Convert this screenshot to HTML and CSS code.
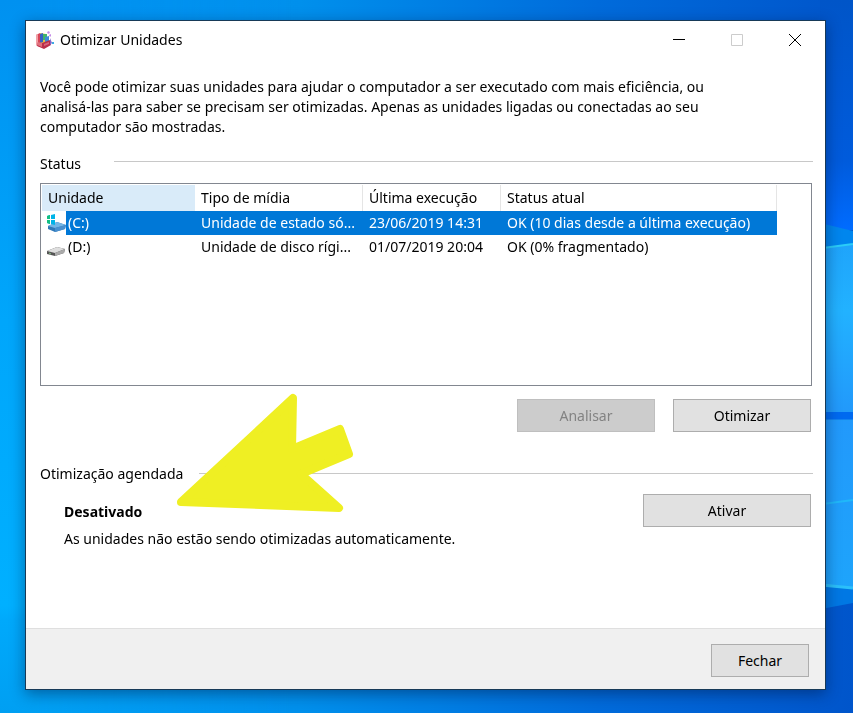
FILE: index.html
```html
<!DOCTYPE html>
<html lang="pt-BR">
<head>
<meta charset="utf-8">
<meta name="viewport" content="width=device-width, initial-scale=1">
<title>Otimizar Unidades</title>
<link rel="stylesheet" href="styles.css">
</head>
<body>
<svg class="wallpaper" viewBox="0 0 853 713" preserveAspectRatio="none" aria-hidden="true">
  <defs>
    <linearGradient id="sky" x1="0" x2="1" y1="0" y2="0">
      <stop offset="0" stop-color="#0095f3"/><stop offset=".35" stop-color="#0090ec"/><stop offset=".7" stop-color="#006bdb"/><stop offset="1" stop-color="#0055cb"/>
    </linearGradient>
    <linearGradient id="left" x1="0" x2="0" y1="0" y2="1">
      <stop offset="0" stop-color="#0091f0"/><stop offset=".45" stop-color="#00a6fb"/><stop offset=".85" stop-color="#00b0ff"/><stop offset=".87" stop-color="#00a9fb"/><stop offset="1" stop-color="#009ff2"/>
    </linearGradient>
    <linearGradient id="fade" x1="0" x2="1" y1="0" y2="0">
      <stop offset="0" stop-color="#fff"/><stop offset=".1" stop-color="#fff"/><stop offset="1" stop-color="#000"/>
    </linearGradient>
    <mask id="fade-right"><rect width="300" height="713" fill="url(#fade)"/></mask>
    <linearGradient id="right" x1="0" x2="0" y1="0" y2="1">
      <stop offset="0" stop-color="#0055c8"/><stop offset=".7" stop-color="#005bdc"/><stop offset="1" stop-color="#006cff"/>
    </linearGradient>
    <linearGradient id="pane" x1="0" x2="0" y1="0" y2="1">
      <stop offset="0" stop-color="#1fa4fb"/><stop offset=".4" stop-color="#22b2ff"/><stop offset="1" stop-color="#2299fb"/>
    </linearGradient>
    <linearGradient id="pane2" x1="0" x2="0" y1="0" y2="1">
      <stop offset="0" stop-color="#2299fb"/><stop offset="1" stop-color="#1ea4fb"/>
    </linearGradient>
  </defs>
  <rect width="853" height="713" fill="url(#sky)"/>
  <rect width="300" height="713" fill="url(#left)" mask="url(#fade-right)"/>
  <rect x="820" width="33" height="230" fill="url(#right)"/>
  <path d="M800 218L853 231V246L800 251Z" fill="#0086ee"/>
  <path d="M800 251L853 244V412H800Z" fill="url(#pane)"/>
  <path d="M800 251L853 244" stroke="#2bcdf8" stroke-width="2"/>
  <path d="M800 412H853V420H800Z" fill="#006af0"/>
  <path d="M800 420H853V588L800 583Z" fill="url(#pane2)"/>
  <path d="M800 411H853M800 420H853" stroke="#209bf5"/>
  <path d="M800 507L853 500" stroke="#20b8fa" stroke-width="2"/>
  <path d="M800 583L853 588V603L800 613Z" fill="#0078e4"/>
  <path d="M800 583L853 588" stroke="#2bc0fa" stroke-width="3"/>
</svg>

<section class="window" aria-labelledby="window-title">
  <header class="titlebar">
    <svg class="app-icon" viewBox="0 0 20 20" aria-hidden="true">
      <path d="M1 5L5 3V17L1 15Z" fill="#d84557"/>
      <path d="M1 5L3 4V16L1 15Z" fill="#f0a0a6"/>
      <path d="M5 3L11 4V17L5 17Z" fill="#e9bd42"/>
      <path d="M5 4L8 3V12L5 13Z" fill="#3563c3"/>
      <path d="M8 4H12V10H8Z" fill="#42b669"/>
      <path d="M10 7L14 6V14L10 15Z" fill="#3b8ed8"/>
      <path d="M3 12L7 13L15 10L16 15L9 19L2 16Z" fill="#b92f4b"/>
      <path d="M3 12L7 13V17L2 15Z" fill="#e0707c"/>
      <path d="M9 14L14 12V14L9 16Z" fill="#d9677c"/>
      <path d="M12 2L14 1L15 3L13 4ZM14 5L16 4L16 6L15 7Z" fill="#c58be8"/>
      <path d="M15 8L17 13L15 15Z" fill="#8268ca"/>
      <path d="M17 12H19V14H17Z" fill="#3cabe4"/>
    </svg>
    <h1 id="window-title">Otimizar Unidades</h1>
    <div class="controls">
      <button type="button" aria-label="Minimizar"><svg viewBox="0 0 12 12"><path d="M0 5.500H12"/></svg></button>
      <button type="button" aria-label="Maximizar" disabled><svg viewBox="0 0 12 12"><path d="M.5 .5H11.500V11.500H.5Z"/></svg></button>
      <button type="button" aria-label="Fechar janela"><svg viewBox="0 0 12 12"><path d="M0 0L12 12M12 0L0 12"/></svg></button>
    </div>
  </header>

  <main class="content">
    <p class="intro">Você pode otimizar suas unidades para ajudar o computador a ser executado com mais eficiência, ou analisá-las para saber se precisam ser otimizadas. Apenas as unidades ligadas ou conectadas ao seu computador são mostradas.</p>

    <h2 class="group status-group"><span>Status</span></h2>
    <div class="list">
      <table>
        <colgroup><col class="c-drive"><col class="c-type"><col class="c-date"><col class="c-status"><col></colgroup>
        <thead>
          <tr><th class="sorted" scope="col">Unidade</th><th scope="col">Tipo de mídia</th><th scope="col">Última execução</th><th scope="col">Status atual</th><td></td></tr>
        </thead>
        <tbody>
          <tr class="selected">
            <td class="drive"><div><svg viewBox="0 0 20 18" aria-hidden="true">
              <path d="M2 12L11 8L20 11L19 15L9 18L2 15Z" fill="#2f78b7"/><path d="M2 12L11 8L20 11L9 14Z" fill="#75b6e5"/><path d="M9 14L20 11L19 15L9 18Z" fill="#4990cf"/>
              <path d="M1 2L4 1V5H1ZM5 1L9 0V5H5ZM1 6H4V10L1 9ZM5 6H9V11L5 10Z" fill="#00b4e8"/><path d="M1 2L4 1V5H1ZM1 6H4V10L1 9Z" fill="#13bf83"/>
            </svg><span>(C:)</span></div></td>
            <td>Unidade de estado só...</td><td>23/06/2019 14:31</td><td>OK (10 dias desde a última execução)</td><td class="rest"></td>
          </tr>
          <tr>
            <td class="drive"><div><svg viewBox="0 0 20 18" aria-hidden="true">
              <path d="M1 13L11 9L19 11L18 15L9 18L1 16Z" fill="#555"/><path d="M1 13L11 9L19 11L9 15Z" fill="#dedede"/><path d="M9 15L19 11L18 15L9 18Z" fill="#aaa"/><path d="M3 15L5 16" stroke="#8bc48b"/>
            </svg><span>(D:)</span></div></td>
            <td>Unidade de disco rígi...</td><td>01/07/2019 20:04</td><td>OK (0% fragmentado)</td><td class="rest"></td>
          </tr>
        </tbody>
      </table>
    </div>
    <div class="actions">
      <button class="btn" type="button" disabled>Analisar</button>
      <button class="btn" type="button">Otimizar</button>
    </div>

    <h2 class="group schedule-group"><span>Otimização agendada</span></h2>
    <div class="schedule">
      <div class="schedule-text">
        <strong>Desativado</strong>
        <p>As unidades não estão sendo otimizadas automaticamente.</p>
      </div>
      <button class="btn wide" type="button">Ativar</button>
    </div>
    <svg class="arrow" viewBox="0 0 180 122" aria-hidden="true">
      <path d="M118 8L117 59L165 39L174 64L126 84L164 118L6 112Z"/>
    </svg>
  </main>

  <footer class="footer"><button class="btn close" type="button">Fechar</button></footer>
</section>
</body>
</html>
```
FILE: styles.css
```css
* { box-sizing: border-box; }

body {
  margin: 0;
  min-height: 100vh;
  padding: 20px 27px 23px 25px;
  display: flex;
  background: #0078d7;
  color: #000;
  font: 14px/20px "Noto Sans", "Open Sans", sans-serif;
}

h1, h2, p { margin: 0; font-size: inherit; font-weight: 400; }
button { font: inherit; color: inherit; }

.wallpaper {
  position: fixed;
  inset: 0;
  z-index: -1;
  width: 100%;
  height: 100%;
}

.window {
  flex: 1;
  min-width: 0;
  display: flex;
  flex-direction: column;
  background: #fff;
  border: 1px solid #173a58;
  box-shadow: 0 4px 14px rgba(0, 20, 60, .45);
}

.titlebar {
  display: flex;
  align-items: center;
  height: 37px;
  padding: 0 1px 0 9px;
}
.app-icon { width: 20px; height: 20px; margin-right: 5px; }
.controls { display: flex; margin-left: auto; }
.controls button {
  width: 58px;
  height: 36px;
  padding: 0;
  border: 0;
  background: none;
  display: flex;
  align-items: center;
  justify-content: center;
}
.controls svg { width: 12px; height: 12px; fill: none; stroke: #000; }
.controls button:disabled svg { stroke: #ccc; }

.content { position: relative; flex: 1; padding: 19px 12px 0 14px; }
.intro { max-width: 690px; }

.group { display: flex; align-items: center; }
.group::after { content: ""; flex: 1; height: 1px; background: #c8c8c8; }
.status-group { margin-top: 17px; }
.status-group::after { margin-bottom: 5px; }
.status-group span { width: 74px; }
.schedule-group { margin-top: 32px; }
.schedule-group::after { margin-bottom: 1px; }
.schedule-group span { margin-right: 16px; }

.list {
  height: 203px;
  margin: 9px 1px 0 0;
  padding: 1px;
  border: 1px solid #828790;
}
table { width: 100%; table-layout: fixed; border-collapse: separate; border-spacing: 0; }
.c-drive { width: 153px; }
.c-type { width: 168px; }
.c-date { width: 138px; }
.c-status { width: 276px; }
th, td {
  padding: 0 6px;
  height: 24px;
  line-height: 24px;
  font-weight: 400;
  text-align: left;
  white-space: nowrap;
}
th { height: 26px; border-right: 1px solid #e5e5e5; }
th.sorted { background: #d9ebf9; border-color: #d9ebf9; }
.selected td { background: #0078d7; color: #fff; }
.selected .rest { background: none; }
td.drive, .selected td.drive { padding: 0; background: none; }
.drive div { display: flex; align-items: center; height: 24px; padding-left: 4px; }
.drive svg { width: 20px; height: 18px; }
.drive span { flex: 1; padding-left: 2px; }
.selected .drive span { background: #0078d7; }

.actions {
  display: flex;
  justify-content: flex-end;
  gap: 18px;
  margin: 13px 2px 0 0;
}
.btn {
  width: 138px;
  height: 33px;
  padding: 0;
  border: 1px solid #adadad;
  background: #e1e1e1;
}
.btn:disabled { background: #ccc; border-color: #bfbfbf; color: #838383; }
.btn.wide { width: 168px; }
.btn.close { width: 98px; }

.schedule {
  display: flex;
  justify-content: space-between;
  align-items: flex-start;
  margin: 10px 2px 0 24px;
}
.schedule-text { padding-top: 8px; }
.schedule-text p { margin-top: 7px; }
strong { display: block; font-weight: 700; }

.arrow {
  position: absolute;
  left: 149px;
  top: 332px;
  width: 180px;
  height: 122px;
  fill: #efef23;
  stroke: #efef23;
  stroke-width: 8px;
  stroke-linejoin: round;
}

.footer {
  display: flex;
  justify-content: flex-end;
  padding: 15px 16px 12px;
  background: #f0f0f0;
  border-top: 1px solid #dfdfdf;
}
```
